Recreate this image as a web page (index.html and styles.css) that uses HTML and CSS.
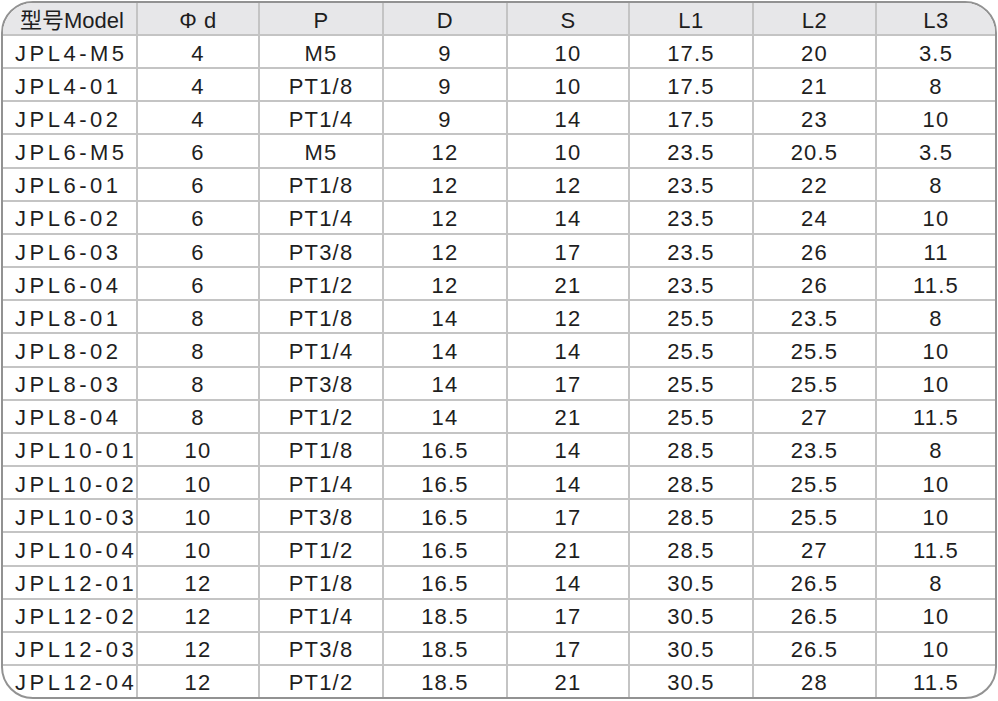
FILE: index.html
```html
<!DOCTYPE html>
<html>
<head>
<meta charset="utf-8">
<link rel="stylesheet" href="styles.css">
</head>
<body>
<div class="frame">
<table class="spec">
<colgroup>
<col class="c0"><col class="c1"><col class="c2"><col class="c3"><col class="c4"><col class="c5"><col class="c6"><col>
</colgroup>
<thead>
<tr><th class="model">型号Model</th><th>Φ d</th><th>P</th><th>D</th><th>S</th><th>L1</th><th>L2</th><th>L3</th></tr>
</thead>
<tbody>
<tr><td>JPL4-M5</td><td>4</td><td>M5</td><td>9</td><td>10</td><td>17.5</td><td>20</td><td>3.5</td></tr>
<tr><td>JPL4-01</td><td>4</td><td>PT1/8</td><td>9</td><td>10</td><td>17.5</td><td>21</td><td>8</td></tr>
<tr><td>JPL4-02</td><td>4</td><td>PT1/4</td><td>9</td><td>14</td><td>17.5</td><td>23</td><td>10</td></tr>
<tr><td>JPL6-M5</td><td>6</td><td>M5</td><td>12</td><td>10</td><td>23.5</td><td>20.5</td><td>3.5</td></tr>
<tr><td>JPL6-01</td><td>6</td><td>PT1/8</td><td>12</td><td>12</td><td>23.5</td><td>22</td><td>8</td></tr>
<tr><td>JPL6-02</td><td>6</td><td>PT1/4</td><td>12</td><td>14</td><td>23.5</td><td>24</td><td>10</td></tr>
<tr><td>JPL6-03</td><td>6</td><td>PT3/8</td><td>12</td><td>17</td><td>23.5</td><td>26</td><td>11</td></tr>
<tr><td>JPL6-04</td><td>6</td><td>PT1/2</td><td>12</td><td>21</td><td>23.5</td><td>26</td><td>11.5</td></tr>
<tr><td>JPL8-01</td><td>8</td><td>PT1/8</td><td>14</td><td>12</td><td>25.5</td><td>23.5</td><td>8</td></tr>
<tr><td>JPL8-02</td><td>8</td><td>PT1/4</td><td>14</td><td>14</td><td>25.5</td><td>25.5</td><td>10</td></tr>
<tr><td>JPL8-03</td><td>8</td><td>PT3/8</td><td>14</td><td>17</td><td>25.5</td><td>25.5</td><td>10</td></tr>
<tr><td>JPL8-04</td><td>8</td><td>PT1/2</td><td>14</td><td>21</td><td>25.5</td><td>27</td><td>11.5</td></tr>
<tr><td>JPL10-01</td><td>10</td><td>PT1/8</td><td>16.5</td><td>14</td><td>28.5</td><td>23.5</td><td>8</td></tr>
<tr><td>JPL10-02</td><td>10</td><td>PT1/4</td><td>16.5</td><td>14</td><td>28.5</td><td>25.5</td><td>10</td></tr>
<tr><td>JPL10-03</td><td>10</td><td>PT3/8</td><td>16.5</td><td>17</td><td>28.5</td><td>25.5</td><td>10</td></tr>
<tr><td>JPL10-04</td><td>10</td><td>PT1/2</td><td>16.5</td><td>21</td><td>28.5</td><td>27</td><td>11.5</td></tr>
<tr><td>JPL12-01</td><td>12</td><td>PT1/8</td><td>16.5</td><td>14</td><td>30.5</td><td>26.5</td><td>8</td></tr>
<tr><td>JPL12-02</td><td>12</td><td>PT1/4</td><td>18.5</td><td>17</td><td>30.5</td><td>26.5</td><td>10</td></tr>
<tr><td>JPL12-03</td><td>12</td><td>PT3/8</td><td>18.5</td><td>17</td><td>30.5</td><td>26.5</td><td>10</td></tr>
<tr><td>JPL12-04</td><td>12</td><td>PT1/2</td><td>18.5</td><td>21</td><td>30.5</td><td>28</td><td>11.5</td></tr>
</tbody>
</table>
</div>
</body>
</html>
```
FILE: styles.css
```css
html, body {
  margin: 0;
  padding: 0;
  background: #ffffff;
}
body {
  width: 998px;
  height: 701px;
  overflow: hidden;
}
.frame {
  box-sizing: border-box;
  margin: 1px 1px 0 1px;
  width: 996px;
  height: 698px;
  border: 2px solid #929292;
  border-radius: 32px;
  overflow: hidden;
  background: #fff;
}
.spec {
  width: 100%;
  height: 100%;
  border-collapse: collapse;
  table-layout: fixed;
  font-family: "Liberation Sans", Arial, "Noto Sans CJK SC", sans-serif;
  color: #1e1e1e;
}
.c0 { width: 134px; }
.c1 { width: 122px; }
.c2 { width: 124px; }
.c3 { width: 124px; }
.c4 { width: 122px; }
.c5 { width: 124px; }
.c6 { width: 123px; }
.spec th, .spec td {
  border-right: 2px solid #c4c4c4;
  border-bottom: 2px solid #c4c4c4;
  text-align: center;
  padding: 4px 0 0 0;
  font-weight: normal;
  font-size: 22px;
  letter-spacing: 1.2px;
  line-height: 1;
  white-space: nowrap;
  overflow: hidden;
}
.spec th:last-child, .spec td:last-child {
  border-right: none;
}
.spec tbody tr:last-child td {
  border-bottom: none;
}
.spec thead tr {
  height: 32px;
  background: #e7e7e9;
}
.spec th {
  font-size: 22px;
  letter-spacing: 0.5px;
}
.spec th.model {
  text-align: left;
  padding-left: 17px;
  letter-spacing: 0;
}
.spec td:first-child {
  text-align: left;
  padding-left: 12px;
  letter-spacing: 3.5px;
}
```
